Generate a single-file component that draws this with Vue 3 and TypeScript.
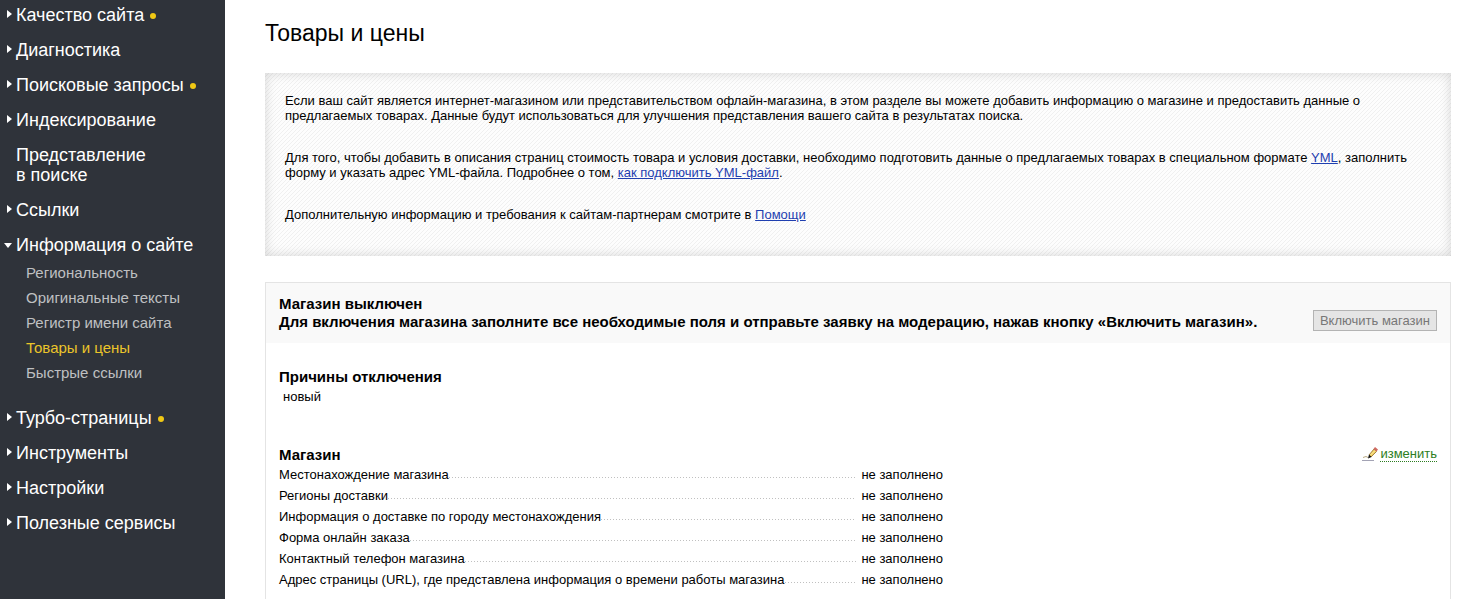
<script setup lang="ts">
interface SubItem {
  label: string
  active?: boolean
}

interface NavItem {
  label: string
  marker: 'closed' | 'open' | 'none'
  dot?: boolean
  children?: SubItem[]
}

const nav: NavItem[] = [
  { label: 'Качество сайта', marker: 'closed', dot: true },
  { label: 'Диагностика', marker: 'closed' },
  { label: 'Поисковые запросы', marker: 'closed', dot: true },
  { label: 'Индексирование', marker: 'closed' },
  { label: 'Представление\nв поиске', marker: 'none' },
  { label: 'Ссылки', marker: 'closed' },
  {
    label: 'Информация о сайте',
    marker: 'open',
    children: [
      { label: 'Региональность' },
      { label: 'Оригинальные тексты' },
      { label: 'Регистр имени сайта' },
      { label: 'Товары и цены', active: true },
      { label: 'Быстрые ссылки' },
    ],
  },
  { label: 'Турбо-страницы', marker: 'closed', dot: true },
  { label: 'Инструменты', marker: 'closed' },
  { label: 'Настройки', marker: 'closed' },
  { label: 'Полезные сервисы', marker: 'closed' },
]

const fields: string[] = [
  'Местонахождение магазина',
  'Регионы доставки',
  'Информация о доставке по городу местонахождения',
  'Форма онлайн заказа',
  'Контактный телефон магазина',
  'Адрес страницы (URL), где представлена информация о времени работы магазина',
]
</script>

<template>
  <div class="page">
    <nav class="sidebar">
      <ul class="menu">
        <li v-for="item in nav" :key="item.label" class="menu-item">
          <a href="#" class="menu-link">
            <span class="marker" :class="item.marker">
              <svg v-if="item.marker === 'closed'" width="5" height="8" viewBox="0 0 5 8">
                <path d="M0 0L5 4L0 8Z" fill="#fff" />
              </svg>
              <svg v-else-if="item.marker === 'open'" width="8" height="5" viewBox="0 0 8 5">
                <path d="M0 0H8L4 5Z" fill="#fff" />
              </svg>
            </span>
            <span class="menu-label">{{ item.label }}</span>
            <span v-if="item.dot" class="dot"></span>
          </a>
          <ul v-if="item.children" class="submenu">
            <li v-for="child in item.children" :key="child.label">
              <a href="#" class="submenu-link" :class="{ active: child.active }">{{ child.label }}</a>
            </li>
          </ul>
        </li>
      </ul>
    </nav>

    <main class="content">
      <h1 class="title">Товары и цены</h1>

      <section class="notice">
        <p>
          Если ваш сайт является интернет-магазином или представительством офлайн-магазина, в этом разделе вы можете
          добавить информацию о магазине и предоставить данные о предлагаемых товарах. Данные будут использоваться для
          улучшения представления вашего сайта в результатах поиска.
        </p>
        <p>
          Для того, чтобы добавить в описания страниц стоимость товара и условия доставки, необходимо подготовить данные
          о предлагаемых товарах в специальном формате <a href="#">YML</a>, заполнить форму и указать адрес YML-файла.
          Подробнее о том, <a href="#">как подключить YML-файл</a>.
        </p>
        <p>Дополнительную информацию и требования к сайтам-партнерам смотрите в <a href="#">Помощи</a></p>
      </section>

      <section class="card">
        <header class="card-head">
          <h2 class="heading">
            Магазин выключен<br />Для включения магазина заполните все необходимые поля и отправьте заявку на модерацию,
            нажав кнопку «Включить магазин».
          </h2>
          <button type="button" class="enable" disabled>Включить магазин</button>
        </header>

        <div class="reasons">
          <h2 class="heading">Причины отключения</h2>
          <p class="reason">новый</p>
        </div>

        <div class="shop">
          <div class="shop-head">
            <h2 class="heading">Магазин</h2>
            <a href="#" class="edit">
              <svg width="16" height="16" viewBox="0 0 16 16" aria-hidden="true">
                <path d="M0 14.5H12" stroke="#a3a3b4" />
                <path d="M1 11.5L4 10.5L6 11.5" stroke="#b9ab84" fill="none" />
                <path d="M7 9L12 3L14.5 5.5L9 11Z" fill="#f0cd62" stroke="#8f6d2b" stroke-width="0.8" />
                <path d="M8.5 9L13 4.5" stroke="#fff0a2" />
                <path d="M11.5 3L13 1L16 3.5L14.5 5.5Z" fill="#cf6a62" />
                <path d="M7 8.5L9.5 11L6 12.5Z" fill="#111" />
              </svg>
              <span class="edit-label">изменить</span>
            </a>
          </div>
          <table class="fields">
            <tbody>
              <tr v-for="field in fields" :key="field">
                <th scope="row">
                  <div class="leader"><span>{{ field }}</span></div>
                </th>
                <td>не заполнено</td>
              </tr>
            </tbody>
          </table>
        </div>
      </section>
    </main>
  </div>
</template>

<style>
body {
  margin: 0;
  background: #fff;
}
</style>

<style scoped>
.page {
  display: flex;
  height: 100vh;
  overflow: hidden;
  font: 13px/15px "Liberation Sans", Arial, sans-serif;
  color: #000;
}

.sidebar {
  flex: none;
  box-sizing: border-box;
  width: 225px;
  padding-top: 5px;
  background: #2f333a;
}

.menu,
.submenu {
  margin: 0;
  padding: 0;
  list-style: none;
}

.menu-item {
  margin-bottom: 15px;
}

.menu-link {
  display: flex;
  font-size: 18px;
  line-height: 20px;
  color: #fff;
  text-decoration: none;
}

.marker {
  display: flex;
  align-items: flex-start;
  justify-content: flex-end;
  width: 12px;
  padding-top: 5px;
  margin-right: 4px;
}

.marker.open {
  padding-top: 8px;
}

.menu-label {
  white-space: pre-line;
}

.dot {
  width: 6px;
  height: 6px;
  margin: 8px 0 0 6px;
  border-radius: 50%;
  background: #f0c814;
}

.submenu {
  padding: 5px 0 8px 26px;
}

.submenu-link {
  font-size: 15px;
  line-height: 25px;
  display: block;
  color: #bfc0c2;
  text-decoration: none;
}

.submenu-link.active {
  color: #ebc52a;
}

.content {
  flex: 1;
  min-width: 0;
  display: flex;
  flex-direction: column;
  padding: 20px 9px 0 40px;
}

.title {
  margin: 0 0 27px;
  font-size: 23px;
  line-height: 26px;
  font-weight: 400;
}

.notice {
  padding: 20px 20px 7px;
  background: linear-gradient(135deg, #fdfdfd 43.75%, #f0f0f0 43.75% 56.25%, #fdfdfd 56.25%) 0 0 / 4px 4px;
  box-shadow: inset 0 0 12px rgba(0, 0, 0, 0.16);
}

.notice p {
  margin: 0 0 27px;
}

.notice a {
  color: #1f3fb0;
}

.card {
  flex: 1 0 auto;
  margin-top: 26px;
  border: 1px solid #e4e4e4;
  border-bottom: 0;
}

.card-head {
  display: flex;
  align-items: flex-end;
  justify-content: space-between;
  padding: 12px 13px;
  background: #f9f9f9;
}

.heading {
  margin: 0;
  font-size: 15px;
  line-height: 18px;
  font-weight: 700;
}

.enable {
  flex: none;
  height: 21px;
  padding: 0 6px;
  border: 1px solid #b3b3b3;
  background: #e5e5e5;
  font: 13px/19px "Liberation Sans", Arial, sans-serif;
  color: #777;
}

.reasons {
  padding: 25px 13px 0;
}

.reason {
  margin: 3px 4px 0;
}

.shop {
  padding: 42px 13px 0;
}

.shop-head {
  display: flex;
  justify-content: space-between;
  height: 18px;
}

.edit {
  display: flex;
  gap: 2px;
  color: #2c7d21;
  text-decoration: none;
}

.edit-label {
  height: 15px;
  border-bottom: 1px dotted #2c7d21;
}

.fields {
  width: 664px;
  border-collapse: collapse;
}

.fields th,
.fields td {
  padding: 0;
  height: 21px;
  font-weight: 400;
  text-align: left;
}

.fields td {
  width: 81px;
  white-space: nowrap;
}

.leader {
  display: flex;
  margin-right: 5px;
  white-space: nowrap;
}

.leader::after {
  content: "";
  flex: 1;
  height: 11px;
  background: repeating-linear-gradient(90deg, #c0c0c0 0 1px, transparent 1px 3px) 0 100% / 100% 1px no-repeat;
}
</style>
